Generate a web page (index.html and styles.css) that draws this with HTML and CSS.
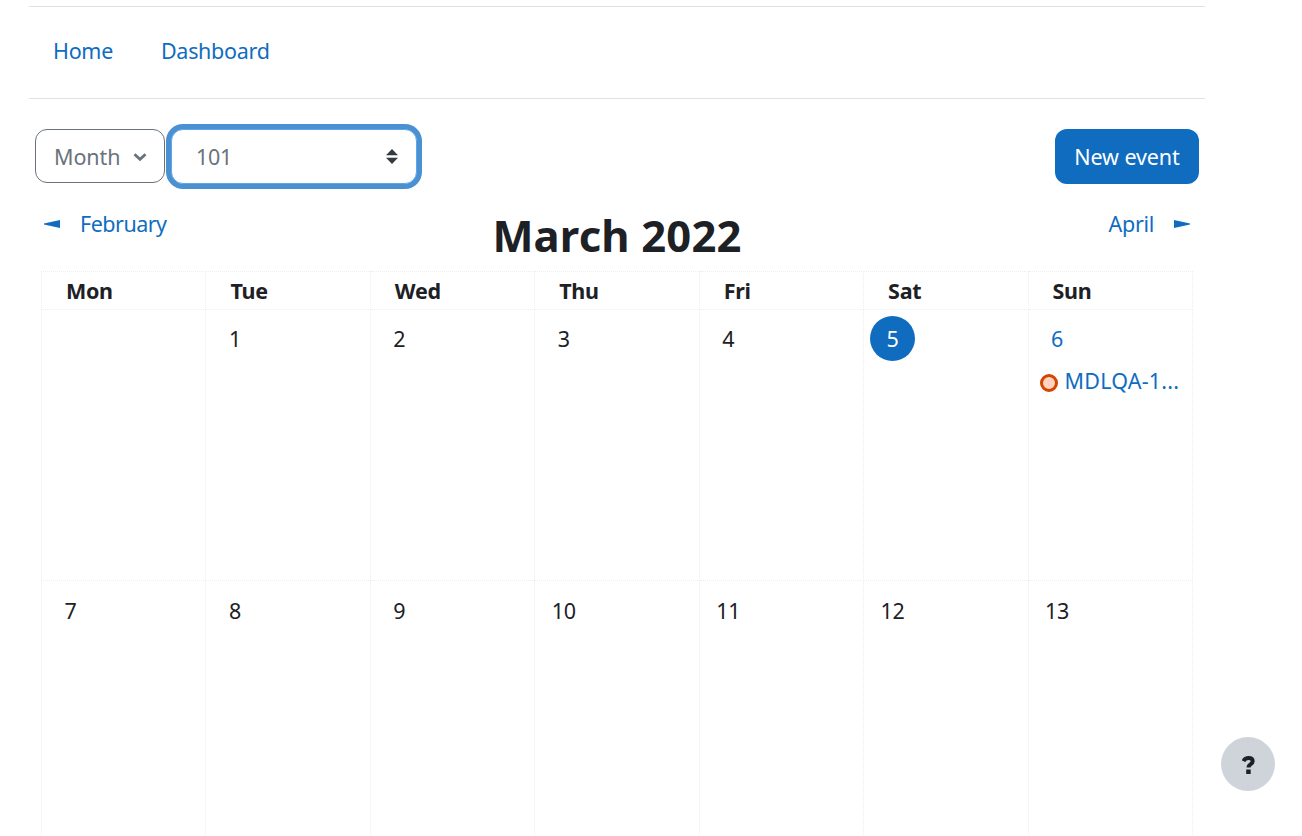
FILE: index.html
```html
<!DOCTYPE html>
<html lang="en">
<head>
    <meta charset="UTF-8">
    <meta name="viewport" content="width=device-width, initial-scale=1.0">
    <title>Calendar: March 2022</title>
    <link rel="stylesheet" href="styles.css">
</head>
<body>
    <div class="page">
        <nav class="navbar">
            <a href="#">Home</a>
            <a href="#">Dashboard</a>
        </nav>

        <div class="toolbar">
            <button type="button" class="btn btn-outline">
                <span>Month</span>
                <svg class="chevron" viewBox="0 0 14 10"><path d="M1.500 2.200L7 7.300l5.500-5.100" fill="none" stroke="currentColor" stroke-width="2.800"/></svg>
            </button>
            <button type="button" class="course-select">
                <span>101</span>
                <svg class="sort" viewBox="0 0 12 15"><path d="M0 6.300L6 0l6 6.300zM0 8.700L6 15l6-6.300z" fill="#343a40"/></svg>
            </button>
            <button type="button" class="btn btn-primary"><span>New event</span></button>
        </div>

        <div class="month-nav">
            <a href="#" class="previous">
                <svg class="arrow" viewBox="0 0 16 8"><path d="M16 0v8L0 4.500v-1z" fill="currentColor"/></svg>
                <span>February</span>
            </a>
            <h2>March 2022</h2>
            <a href="#" class="next">
                <span>April</span>
                <svg class="arrow" viewBox="0 0 16 8"><path d="M0 0v8l16-3.500v-1z" fill="currentColor"/></svg>
            </a>
        </div>

        <table class="calendar">
            <thead>
                <tr>
                    <th>Mon</th>
                    <th>Tue</th>
                    <th>Wed</th>
                    <th>Thu</th>
                    <th>Fri</th>
                    <th>Sat</th>
                    <th>Sun</th>
                </tr>
            </thead>
            <tbody>
                <tr>
                    <td></td>
                    <td><span class="day">1</span></td>
                    <td><span class="day">2</span></td>
                    <td><span class="day">3</span></td>
                    <td><span class="day">4</span></td>
                    <td><span class="day today">5</span></td>
                    <td>
                        <a href="#" class="day">6</a>
                        <a href="#" class="event"><i class="dot"></i><span>MDLQA-1...</span></a>
                    </td>
                </tr>
                <tr>
                    <td><span class="day">7</span></td>
                    <td><span class="day">8</span></td>
                    <td><span class="day">9</span></td>
                    <td><span class="day">10</span></td>
                    <td><span class="day">11</span></td>
                    <td><span class="day">12</span></td>
                    <td><span class="day">13</span></td>
                </tr>
            </tbody>
        </table>
    </div>

    <button type="button" class="help" aria-label="Help">
        <svg viewBox="0 0 13 18"><path d="M1.500 5.200C2.500 3.100 4.100 2.100 6.400 2.100c2.700 0 4.300 1.200 4.300 3.200 0 3-4.200 2.800-4.200 6.200" fill="none" stroke="#1d2125" stroke-width="4"/><path d="M4.200 13.500h4.500V18H4.200z" fill="#1d2125"/></svg>
    </button>
</body>
</html>
```

FILE: styles.css
```css
* {
    box-sizing: border-box;
}

body {
    height: 836px;
    margin: 0;
    overflow: hidden;
    background: #ffffff;
    color: #1d2125;
    font-family: "Noto Sans", "Open Sans", sans-serif;
    font-size: 21.5px;
    line-height: 34px;
    letter-spacing: -0.3px;
}

a {
    color: #0f6cbf;
    text-decoration: none;
}

button {
    padding: 0;
    border: none;
    font: inherit;
    letter-spacing: inherit;
}

svg {
    display: block;
    flex: none;
}

.page {
    width: 1176px;
    margin-left: 29px;
    padding-top: 6px;
}

.navbar {
    display: flex;
    gap: 48px;
    height: 93px;
    padding: 27px 24px 0;
    border-top: 1px solid #dee2e6;
    border-bottom: 1px solid #dee2e6;
}

.toolbar {
    display: flex;
    margin-top: 30px;
    padding: 0 6px;
}

.btn {
    display: flex;
    align-items: center;
    height: 54px;
    border-radius: 12px;
}

.btn-outline {
    width: 130px;
    justify-content: space-between;
    padding: 1px 17px 0 18px;
    border: 1px solid #6a737b;
    background: #ffffff;
    color: #6a737b;
    letter-spacing: -0.1px;
}

.btn-primary {
    width: 144px;
    height: 55px;
    margin-left: auto;
    justify-content: center;
    background: #0f6cbf;
    color: #ffffff;
    letter-spacing: -0.1px;
}

.chevron {
    width: 14px;
    height: 10px;
}

.course-select {
    display: flex;
    justify-content: space-between;
    align-items: center;
    width: 246px;
    height: 55px;
    margin-left: 6px;
    padding: 0 18px 0 24px;
    border: 1px solid #5aa8f0;
    border-radius: 12px;
    background: #ffffff;
    color: #6a737b;
    box-shadow: 0 0 0 5px #4b90d0;
}

.sort {
    width: 12px;
    height: 15px;
}

.month-nav {
    display: grid;
    grid-template-columns: 1fr 2fr 1fr;
    height: 87px;
    padding: 0 15px;
}

.month-nav a {
    display: flex;
    align-items: center;
    gap: 20px;
    height: 34px;
    margin-top: 23px;
}

.month-nav h2 {
    margin: 24px 0 0;
    font-size: 43.5px;
    line-height: 54px;
    font-weight: 700;
    letter-spacing: 0.2px;
    text-align: center;
}

.month-nav .previous {
    letter-spacing: -0.5px;
}

.month-nav .next {
    justify-content: flex-end;
}

.arrow {
    width: 16px;
    height: 8px;
}

.calendar {
    width: 1152px;
    margin-left: 12px;
    border-collapse: collapse;
    table-layout: fixed;
}

.calendar th,
.calendar td {
    border: 1px dotted #eceeef;
    text-align: left;
    vertical-align: top;
}

.calendar th {
    height: 38px;
    padding: 2px 0 0 24px;
    font-weight: 700;
}

.calendar td {
    height: 271px;
    padding: 6px 6px 0;
}

.calendar tr + tr td {
    padding-top: 7px;
}

.day {
    display: block;
    width: 45px;
    height: 45px;
    border-radius: 50%;
    line-height: 45px;
    text-align: center;
}

.today {
    background: #0f6cbf;
    color: #ffffff;
}

.event {
    display: flex;
    align-items: center;
    gap: 7px;
    height: 34px;
    margin: 3px 0 0 5px;
    letter-spacing: 0.2px;
    white-space: nowrap;
}

.dot {
    flex: none;
    width: 18px;
    height: 18px;
    margin-top: 3px;
    border: 3px solid #d74301;
    border-radius: 50%;
    background: #ffd3bd;
}

.help {
    position: fixed;
    right: 27px;
    bottom: 45px;
    display: flex;
    align-items: center;
    justify-content: center;
    width: 54px;
    height: 54px;
    border-radius: 50%;
    background: #ced4da;
}

.help svg {
    width: 13px;
    height: 18px;
    margin-top: 2px;
}
```
